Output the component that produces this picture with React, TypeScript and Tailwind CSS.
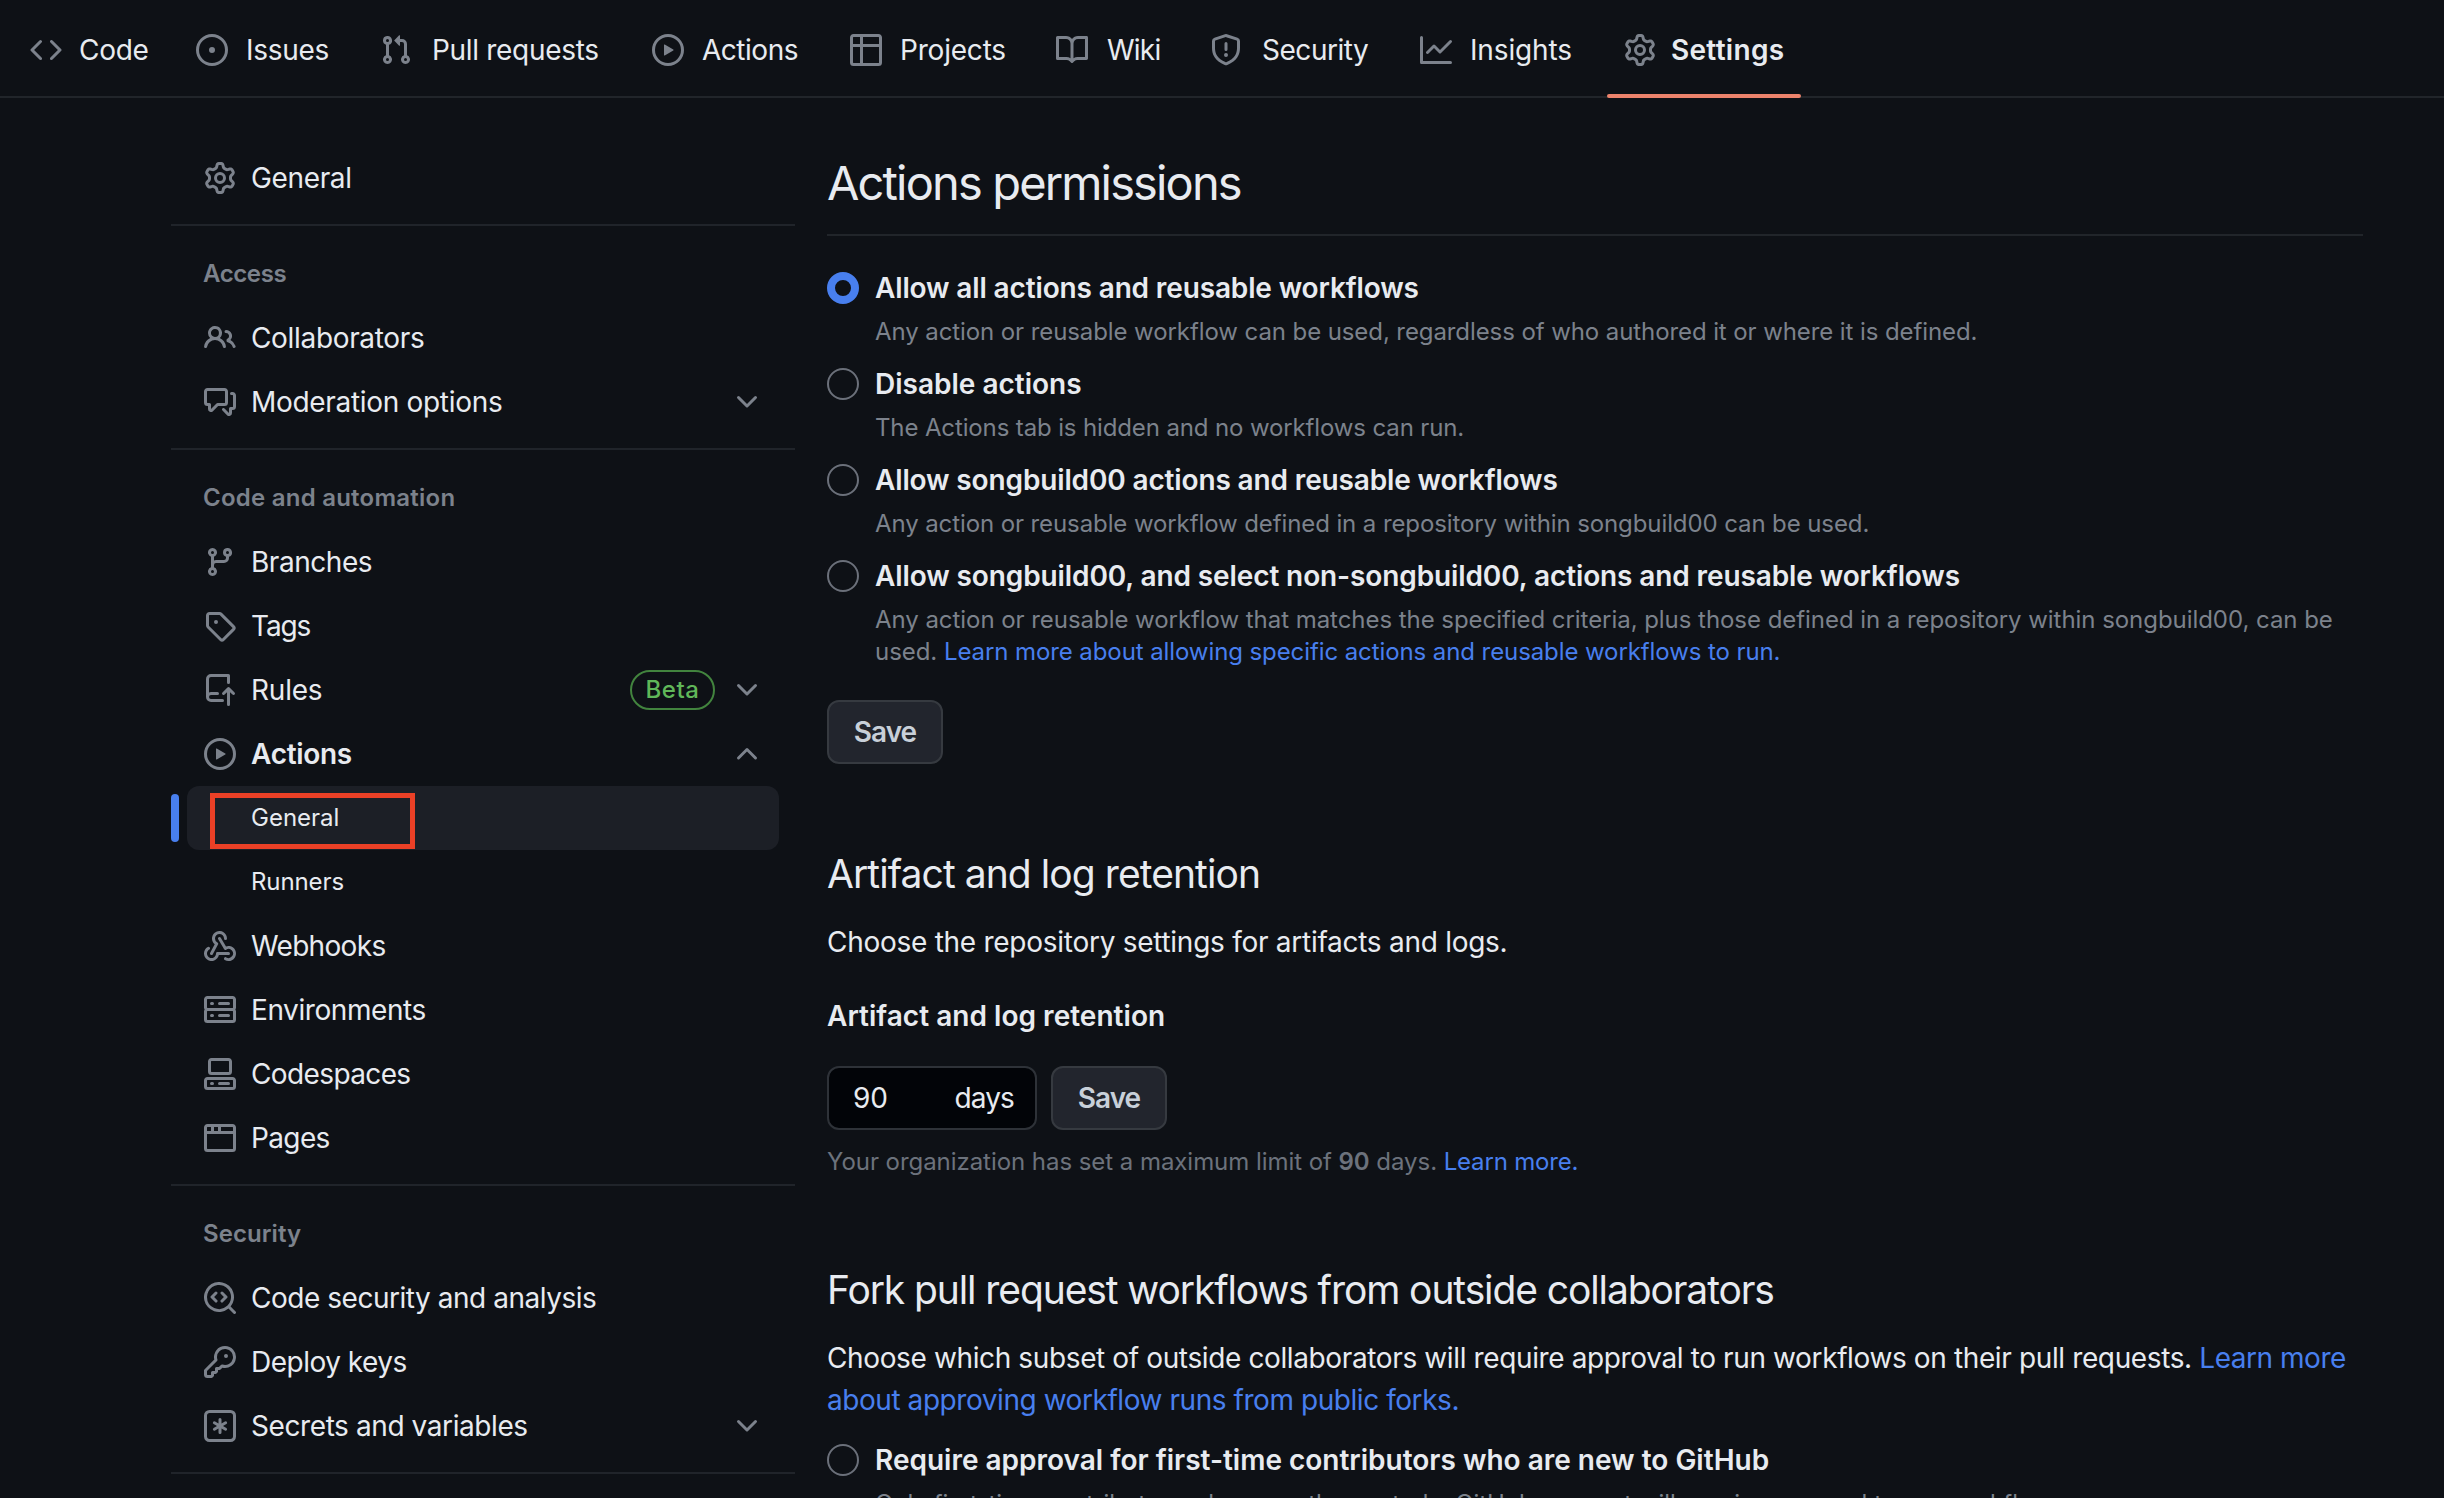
import React from 'react';

const ICONS = {
  code: 'm11.28 3.22 4.25 4.25a.75.75 0 0 1 0 1.06l-4.25 4.25a.749.749 0 0 1-1.275-.326.749.749 0 0 1 .215-.734L13.94 8l-3.72-3.72a.749.749 0 0 1 .326-1.275.749.749 0 0 1 .734.215Zm-6.56 0a.751.751 0 0 1 1.042.018.751.751 0 0 1 .018 1.042L2.06 8l3.72 3.72a.749.749 0 0 1-.326 1.275.749.749 0 0 1-.734-.215L.47 8.53a.75.75 0 0 1 0-1.06Z',
  issue: 'M8 9.5a1.5 1.5 0 1 0 0-3 1.5 1.5 0 0 0 0 3Z M8 0a8 8 0 1 1 0 16A8 8 0 0 1 8 0ZM1.5 8a6.5 6.5 0 1 0 13 0 6.5 6.5 0 0 0-13 0Z',
  pullRequest: 'M1.5 3.25a2.25 2.25 0 1 1 3 2.122v5.256a2.251 2.251 0 1 1-1.5 0V5.372A2.25 2.25 0 0 1 1.5 3.25Zm5.677-.177L9.573.677A.25.25 0 0 1 10 .854V2.5h1A2.5 2.5 0 0 1 13.5 5v5.628a2.251 2.251 0 1 1-1.5 0V5a1 1 0 0 0-1-1h-1v1.646a.25.25 0 0 1-.427.177L7.177 3.427a.25.25 0 0 1 0-.354ZM3.75 2.5a.75.75 0 1 0 0 1.5.75.75 0 0 0 0-1.5Zm0 9.5a.75.75 0 1 0 0 1.5.75.75 0 0 0 0-1.5Zm8.25.75a.75.75 0 1 0 1.5 0 .75.75 0 0 0-1.5 0Z',
  play: 'M8 0a8 8 0 1 1 0 16A8 8 0 0 1 8 0ZM1.5 8a6.5 6.5 0 1 0 13 0 6.5 6.5 0 0 0-13 0Zm4.879-2.773 4.264 2.559a.25.25 0 0 1 0 .428l-4.264 2.559A.25.25 0 0 1 6 10.559V5.442a.25.25 0 0 1 .379-.215Z',
  table: 'M0 1.75C0 .784.784 0 1.75 0h12.5C15.216 0 16 .784 16 1.75v12.5A1.75 1.75 0 0 1 14.25 16H1.75A1.75 1.75 0 0 1 0 14.25ZM6.5 6.5v8h7.75a.25.25 0 0 0 .25-.25V6.5Zm8-1.5V1.75a.25.25 0 0 0-.25-.25H6.5V5Zm-13 1.5v7.75c0 .138.112.25.25.25H5v-8ZM5 5V1.5H1.75a.25.25 0 0 0-.25.25V5Z',
  book: 'M0 1.75A.75.75 0 0 1 .75 1h4.253c1.227 0 2.317.59 3 1.501A3.743 3.743 0 0 1 11.006 1h4.245a.75.75 0 0 1 .75.75v10.5a.75.75 0 0 1-.75.75h-4.507a2.25 2.25 0 0 0-1.591.659l-.622.621a.75.75 0 0 1-1.06 0l-.622-.621A2.25 2.25 0 0 0 5.258 13H.75a.75.75 0 0 1-.75-.75Zm7.251 10.324.004-5.073-.002-2.253A2.25 2.25 0 0 0 5.003 2.5H1.5v9h3.757a3.75 3.75 0 0 1 1.994.574ZM8.755 4.75l-.004 7.322a3.752 3.752 0 0 1 1.992-.572H14.5v-9h-3.495a2.25 2.25 0 0 0-2.25 2.25Z',
  shield: 'M7.467.133a1.748 1.748 0 0 1 1.066 0l5.25 1.68A1.75 1.75 0 0 1 15 3.48V7c0 1.566-.32 3.182-1.303 4.682-.983 1.498-2.585 2.813-5.032 3.855a1.697 1.697 0 0 1-1.33 0c-2.447-1.042-4.049-2.357-5.032-3.855C1.32 10.182 1 8.566 1 7V3.48a1.75 1.75 0 0 1 1.217-1.667Zm.61 1.429a.25.25 0 0 0-.153 0l-5.25 1.68a.25.25 0 0 0-.174.238V7c0 1.358.275 2.666 1.057 3.86.784 1.194 2.121 2.34 4.366 3.297a.196.196 0 0 0 .154 0c2.245-.956 3.582-2.104 4.366-3.298C13.225 9.666 13.5 8.36 13.5 7V3.48a.251.251 0 0 0-.174-.237l-5.25-1.68ZM8.75 4.75v3a.75.75 0 0 1-1.5 0v-3a.75.75 0 0 1 1.5 0ZM9 10.5a1 1 0 1 1-2 0 1 1 0 0 1 2 0Z',
  graph: 'M1.5 1.75V13.5h13.75a.75.75 0 0 1 0 1.5H.75a.75.75 0 0 1-.75-.75V1.75a.75.75 0 0 1 1.5 0Zm14.28 2.53-5.25 5.25a.75.75 0 0 1-1.06 0L7 7.06 4.28 9.78a.751.751 0 0 1-1.042-.018.751.751 0 0 1-.018-1.042l3.25-3.25a.75.75 0 0 1 1.06 0L10 7.94l4.72-4.72a.751.751 0 0 1 1.042.018.751.751 0 0 1 .018 1.042Z',
  gear: 'M8 0a8.2 8.2 0 0 1 .701.031C9.444.095 9.99.645 10.16 1.29l.288 1.107c.018.066.079.158.212.224.231.114.454.243.668.386.123.082.233.09.299.071l1.103-.303c.644-.176 1.392.021 1.82.63.27.385.506.792.704 1.218.315.675.111 1.422-.364 1.891l-.814.806c-.049.048-.098.147-.088.294.016.257.016.515 0 .772-.01.147.038.246.088.294l.814.806c.475.469.679 1.216.364 1.891a7.977 7.977 0 0 1-.704 1.217c-.428.61-1.176.807-1.82.63l-1.102-.302c-.067-.019-.177-.011-.3.071a5.909 5.909 0 0 1-.668.386c-.133.066-.194.158-.211.224l-.29 1.106c-.168.646-.715 1.196-1.458 1.26a8.006 8.006 0 0 1-1.402 0c-.743-.064-1.289-.614-1.458-1.26l-.289-1.106c-.018-.066-.079-.158-.212-.224a5.738 5.738 0 0 1-.668-.386c-.123-.082-.233-.09-.299-.071l-1.103.303c-.644.176-1.392-.021-1.82-.63a8.12 8.12 0 0 1-.704-1.218c-.315-.675-.111-1.422.363-1.891l.815-.806c.05-.048.098-.147.088-.294a6.214 6.214 0 0 1 0-.772c.01-.147-.038-.246-.088-.294l-.815-.806C.635 6.045.431 5.298.746 4.623a7.92 7.92 0 0 1 .704-1.217c.428-.61 1.176-.807 1.82-.63l1.102.302c.067.019.177.011.3-.071.214-.143.437-.272.668-.386.133-.066.194-.158.211-.224l.29-1.106C6.009.645 6.556.095 7.299.03 7.53.01 7.764 0 8 0Zm-.571 1.525c-.036.003-.108.036-.137.146l-.289 1.105c-.147.561-.549.967-.998 1.189-.173.086-.34.183-.5.29-.417.278-.97.423-1.529.27l-1.103-.303c-.109-.03-.175.016-.195.045-.22.312-.412.644-.573.99-.014.031-.021.11.059.19l.815.806c.411.406.562.957.53 1.456a4.709 4.709 0 0 0 0 .582c.032.499-.119 1.05-.53 1.456l-.815.806c-.081.08-.073.159-.059.19.162.346.353.677.573.989.02.03.085.076.195.046l1.102-.303c.56-.153 1.113-.008 1.53.27.161.107.328.204.501.29.447.222.85.629.997 1.189l.289 1.105c.029.109.101.143.137.146a6.6 6.6 0 0 0 1.142 0c.036-.003.108-.036.137-.146l.289-1.105c.147-.561.549-.967.998-1.189.173-.086.34-.183.5-.29.417-.278.97-.423 1.529-.27l1.103.303c.109.029.175-.016.195-.045.22-.313.411-.644.573-.99.014-.031.021-.11-.059-.19l-.815-.806c-.411-.406-.562-.957-.53-1.456a4.709 4.709 0 0 0 0-.582c-.032-.499.119-1.05.53-1.456l.815-.806c.081-.08.073-.159.059-.19a6.464 6.464 0 0 0-.573-.989c-.02-.03-.085-.076-.195-.046l-1.102.303c-.56.153-1.113.008-1.53-.27a4.44 4.44 0 0 0-.501-.29c-.447-.222-.85-.629-.997-1.189l-.289-1.105c-.029-.11-.101-.143-.137-.146a6.6 6.6 0 0 0-1.142 0ZM11 8a3 3 0 1 1-6 0 3 3 0 0 1 6 0ZM9.5 8a1.5 1.5 0 1 0-3.001.001A1.5 1.5 0 0 0 9.5 8Z',
  people: 'M2 5.5a3.5 3.5 0 1 1 5.898 2.549 5.508 5.508 0 0 1 3.034 4.084.75.75 0 1 1-1.482.235 4 4 0 0 0-7.9 0 .75.75 0 0 1-1.482-.236A5.507 5.507 0 0 1 3.102 8.05 3.493 3.493 0 0 1 2 5.5ZM11 4a3.001 3.001 0 0 1 2.22 5.018 5.01 5.01 0 0 1 2.56 3.012.749.749 0 0 1-.885.954.752.752 0 0 1-.549-.514 3.507 3.507 0 0 0-2.522-2.372.75.75 0 0 1-.574-.73v-.352a.75.75 0 0 1 .416-.672A1.5 1.5 0 0 0 11 5.5.75.75 0 0 1 11 4Zm-5.5-.5a2 2 0 1 0-.001 3.999A2 2 0 0 0 5.5 3.5Z',
  discussion: 'M1.75 1h8.5c.966 0 1.75.784 1.75 1.75v5.5A1.75 1.75 0 0 1 10.25 10H7.061l-2.574 2.573A1.458 1.458 0 0 1 2 11.543V10h-.25A1.75 1.75 0 0 1 0 8.25v-5.5C0 1.784.784 1 1.75 1ZM1.5 2.75v5.5c0 .138.112.25.25.25h1a.75.75 0 0 1 .75.75v2.19l2.72-2.72a.749.749 0 0 1 .53-.22h3.5a.25.25 0 0 0 .25-.25v-5.5a.25.25 0 0 0-.25-.25h-8.5a.25.25 0 0 0-.25.25Zm13 2a.25.25 0 0 0-.25-.25h-.5a.75.75 0 0 1 0-1.5h.5c.966 0 1.75.784 1.75 1.75v5.5A1.75 1.75 0 0 1 14.25 12H14v1.543a1.458 1.458 0 0 1-2.487 1.03L9.22 12.28a.749.749 0 0 1 .326-1.275.749.749 0 0 1 .734.215l2.22 2.22v-2.19a.75.75 0 0 1 .75-.75h1a.25.25 0 0 0 .25-.25Z',
  branch: 'M9.5 3.25a2.25 2.25 0 1 1 3 2.122V6A2.5 2.5 0 0 1 10 8.5H6a1 1 0 0 0-1 1v1.128a2.251 2.251 0 1 1-1.5 0V5.372a2.25 2.25 0 1 1 1.5 0v1.836A2.493 2.493 0 0 1 6 7h4a1 1 0 0 0 1-1v-.628A2.25 2.25 0 0 1 9.5 3.25Zm-6 0a.75.75 0 1 0 1.5 0 .75.75 0 0 0-1.5 0Zm8.25-.75a.75.75 0 1 0 0 1.5.75.75 0 0 0 0-1.5ZM4.25 12a.75.75 0 1 0 0 1.5.75.75 0 0 0 0-1.5Z',
  tag: 'M1 7.775V2.75C1 1.784 1.784 1 2.75 1h5.025c.464 0 .91.184 1.238.513l6.25 6.25a1.75 1.75 0 0 1 0 2.474l-5.026 5.026a1.75 1.75 0 0 1-2.474 0l-6.25-6.25A1.752 1.752 0 0 1 1 7.775Zm1.5 0c0 .066.026.13.073.177l6.25 6.25a.25.25 0 0 0 .354 0l5.025-5.025a.25.25 0 0 0 0-.354l-6.25-6.25a.25.25 0 0 0-.177-.073H2.75a.25.25 0 0 0-.25.25ZM6 5a1 1 0 1 1 0 2 1 1 0 0 1 0-2Z',
  repoPush: 'M1 2.5A2.5 2.5 0 0 1 3.5 0h8.75a.75.75 0 0 1 .75.75v3.5a.75.75 0 0 1-1.5 0V1.5h-8a1 1 0 0 0-1 1v6.708A2.493 2.493 0 0 1 3.5 9h3.25a.75.75 0 0 1 0 1.5H3.5a1 1 0 0 0 0 2h5.75a.75.75 0 0 1 0 1.5H3.5A2.5 2.5 0 0 1 1 11.5Zm13.23 7.79-1.224-1.224v6.184a.75.75 0 0 1-1.5 0V9.066L10.28 10.29a.75.75 0 0 1-1.06-1.061l2.505-2.504a.75.75 0 0 1 1.06 0L15.29 9.23a.751.751 0 0 1-.018 1.042.751.751 0 0 1-1.042.018Z',
  webhook: 'M5.5 4.25a2.25 2.25 0 0 1 4.5 0 .75.75 0 0 0 1.5 0 3.75 3.75 0 1 0-6.14 2.889l-2.272 4.258a.75.75 0 0 0 1.324.706L7 7.25a.75.75 0 0 0-.309-1.015A2.25 2.25 0 0 1 5.5 4.25Z M7.364 3.607a.75.75 0 0 1 1.03.257l2.608 4.349a3.75 3.75 0 1 1-.628 6.785.75.75 0 0 1 .752-1.299 2.25 2.25 0 1 0-.033-3.88.75.75 0 0 1-1.03-.256L7.107 4.636a.75.75 0 0 1 .257-1.03Z M2.9 8.776A.75.75 0 0 1 2.625 9.8 2.25 2.25 0 1 0 6 11.75a.75.75 0 0 1 .75-.751h5.5a.75.75 0 0 1 0 1.5H7.425a3.751 3.751 0 1 1-5.55-3.998.75.75 0 0 1 1.024.274Z',
  server: 'M1.75 1h12.5c.966 0 1.75.784 1.75 1.75v4c0 .372-.116.717-.314 1 .198.283.314.628.314 1v4a1.75 1.75 0 0 1-1.75 1.75H1.75A1.75 1.75 0 0 1 0 12.75v-4c0-.358.109-.707.314-1a1.739 1.739 0 0 1-.314-1v-4C0 1.784.784 1 1.75 1ZM1.5 2.75v4c0 .138.112.25.25.25h12.5a.25.25 0 0 0 .25-.25v-4a.25.25 0 0 0-.25-.25H1.75a.25.25 0 0 0-.25.25Zm.25 5.75a.25.25 0 0 0-.25.25v4c0 .138.112.25.25.25h12.5a.25.25 0 0 0 .25-.25v-4a.25.25 0 0 0-.25-.25ZM7 4.75A.75.75 0 0 1 7.75 4h4.5a.75.75 0 0 1 0 1.5h-4.5A.75.75 0 0 1 7 4.75ZM7.75 10h4.5a.75.75 0 0 1 0 1.5h-4.5a.75.75 0 0 1 0-1.5ZM3 4.75A.75.75 0 0 1 3.75 4h.5a.75.75 0 0 1 0 1.5h-.5A.75.75 0 0 1 3 4.75ZM3.75 10h.5a.75.75 0 0 1 0 1.5h-.5a.75.75 0 0 1 0-1.5Z',
  codespaces: 'M0 11.25c0-.966.784-1.75 1.75-1.75h12.5c.966 0 1.75.784 1.75 1.75v3A1.75 1.75 0 0 1 14.25 16H1.75A1.75 1.75 0 0 1 0 14.25Zm2-9.5C2 .784 2.784 0 3.75 0h8.5C13.216 0 14 .784 14 1.75v5a1.75 1.75 0 0 1-1.75 1.75h-8.5A1.75 1.75 0 0 1 2 6.75Zm1.75-.25a.25.25 0 0 0-.25.25v5c0 .138.112.25.25.25h8.5a.25.25 0 0 0 .25-.25v-5a.25.25 0 0 0-.25-.25Zm-2 9.5a.25.25 0 0 0-.25.25v3c0 .138.112.25.25.25h12.5a.25.25 0 0 0 .25-.25v-3a.25.25 0 0 0-.25-.25Z M7 12.75a.75.75 0 0 1 .75-.75h4.5a.75.75 0 0 1 0 1.5h-4.5a.75.75 0 0 1-.75-.75Zm-4 0a.75.75 0 0 1 .75-.75h.5a.75.75 0 0 1 0 1.5h-.5a.75.75 0 0 1-.75-.75Z',
  browser: 'M0 2.75C0 1.784.784 1 1.75 1h12.5c.966 0 1.75.784 1.75 1.75v10.5A1.75 1.75 0 0 1 14.25 15H1.75A1.75 1.75 0 0 1 0 13.25ZM14.5 6h-13v7.25c0 .138.112.25.25.25h12.5a.25.25 0 0 0 .25-.25Zm-6-3.5v2h6V2.75a.25.25 0 0 0-.25-.25ZM5 2.5v2h2v-2Zm-3.25 0a.25.25 0 0 0-.25.25V4.5h2v-2Z',
  codescan: 'M8.47 4.97a.75.75 0 0 0 0 1.06L9.94 7.5 8.47 8.97a.75.75 0 1 0 1.06 1.06l2-2a.75.75 0 0 0 0-1.06l-2-2a.75.75 0 0 0-1.06 0ZM6.53 6.03a.75.75 0 0 0-1.06-1.06l-2 2a.75.75 0 0 0 0 1.06l2 2a.75.75 0 1 0 1.06-1.06L5.06 7.5l1.47-1.47Z M12.246 13.307a7.501 7.501 0 1 1 1.06-1.06l2.474 2.473a.749.749 0 1 1-1.06 1.06l-2.474-2.473ZM1.5 7.5a6.002 6.002 0 0 0 3.608 5.504 6.002 6.002 0 0 0 6.486-1.117.748.748 0 0 1 .292-.293A6 6 0 1 0 1.5 7.5Z',
  key: 'M10.5 0a5.499 5.499 0 1 1-1.288 10.848l-.932.932a.749.749 0 0 1-.53.22H7v.75a.749.749 0 0 1-.22.53l-.5.5a.749.749 0 0 1-.53.22H5v.75a.749.749 0 0 1-.22.53l-.5.5a.749.749 0 0 1-.53.22h-2A1.75 1.75 0 0 1 0 14.25v-2c0-.199.079-.389.22-.53l4.932-4.932A5.5 5.5 0 0 1 10.5 0Zm-4 5.5c-.001.431.069.86.205 1.269a.75.75 0 0 1-.181.768L1.5 12.56v1.69c0 .138.112.25.25.25h1.69l.06-.06v-1.19a.75.75 0 0 1 .75-.75h1.19l.06-.06v-1.19a.75.75 0 0 1 .75-.75h1.19l1.023-1.025a.75.75 0 0 1 .768-.18A4 4 0 1 0 6.5 5.5ZM11 6a1 1 0 1 1 0-2 1 1 0 0 1 0 2Z',
  asterisk: 'M0 2.75A2.75 2.75 0 0 1 2.75 0h10.5A2.75 2.75 0 0 1 16 2.75v10.5A2.75 2.75 0 0 1 13.25 16H2.75A2.75 2.75 0 0 1 0 13.25ZM2.75 1.5c-.69 0-1.25.56-1.25 1.25v10.5c0 .69.56 1.25 1.25 1.25h10.5c.69 0 1.25-.56 1.25-1.25V2.75c0-.69-.56-1.25-1.25-1.25Z M8 4a.75.75 0 0 1 .75.75V6.7l1.69-.975a.75.75 0 0 1 .75 1.3L9.5 8l1.69.976a.75.75 0 0 1-.75 1.298L8.75 9.3v1.951a.75.75 0 0 1-1.5 0V9.299l-1.69.976a.75.75 0 0 1-.75-1.3L6.5 8l-1.69-.975a.75.75 0 0 1 .75-1.3l1.69.976V4.75A.75.75 0 0 1 8 4Z',
  down: 'M12.78 5.22a.749.749 0 0 1 0 1.06l-4.25 4.25a.749.749 0 0 1-1.06 0L3.22 6.28a.749.749 0 1 1 1.06-1.06L8 8.939l3.72-3.719a.749.749 0 0 1 1.06 0Z',
  up: 'M3.22 10.53a.749.749 0 0 1 0-1.06l4.25-4.25a.749.749 0 0 1 1.06 0l4.25 4.25a.749.749 0 1 1-1.06 1.06L8 6.811 4.28 10.53a.749.749 0 0 1-1.06 0Z',
};

type IconName = keyof typeof ICONS;

function Icon({ name }: { name: IconName }) {
  return (
    <svg viewBox="0 0 16 16" className="size-8 shrink-0 fill-[#7c828c]" aria-hidden="true">
      <path d={ICONS[name]} />
    </svg>
  );
}

const TABS: { icon: IconName; label: string; box: string; text: string }[] = [
  { icon: 'code', label: 'Code', box: 'w-[150px]', text: 'pl-px tracking-[-0.3px]' },
  { icon: 'issue', label: 'Issues', box: 'w-[168px]', text: 'pl-0.5 tracking-[-0.31px]' },
  { icon: 'pullRequest', label: 'Pull requests', box: 'w-[256px]', text: 'pl-1 tracking-[-0.31px]' },
  { icon: 'play', label: 'Actions', box: 'w-[182px]', text: 'pl-0.5 tracking-[-0.48px]' },
  { icon: 'table', label: 'Projects', box: 'w-[190px]', text: 'pl-0.5 tracking-[-0.2px]' },
  { icon: 'book', label: 'Wiki', box: 'w-[138px]', text: 'pl-[3px] tracking-[-0.78px]' },
  { icon: 'shield', label: 'Security', box: 'w-[194px]', text: 'pl-1 tracking-[-0.47px]' },
  { icon: 'graph', label: 'Insights', box: 'w-[188px]', text: 'pl-0.5 tracking-[-0.15px]' },
];

function TopNav() {
  return (
    <nav className="flex h-[98px] gap-4 border-b-2 border-[#21252a] pl-3.5">
      {TABS.map((t) => (
        <a key={t.label} className={`flex shrink-0 items-center gap-4 pt-1 pl-4 whitespace-nowrap ${t.box}`}>
          <Icon name={t.icon} />
          <span className={t.text}>{t.label}</span>
        </a>
      ))}
      <a className="relative flex w-[192px] shrink-0 items-center gap-[15px] pt-1 pl-4 font-semibold tracking-[0.3px]">
        <Icon name="gear" />
        Settings
        <span className="absolute -inset-x-px -bottom-0.5 h-1 rounded-sm bg-[#ec836c]" />
      </a>
    </nav>
  );
}

function Row({ icon, label, track, chevron, badge, bold }: {
  icon: IconName; label: string; track: string; chevron?: 'up' | 'down'; badge?: string; bold?: boolean;
}) {
  return (
    <a className="mx-4 flex h-16 items-center pr-4 pl-[17px]">
      <Icon name={icon} />
      <span className={`flex-1 pl-[15px] ${track} ${bold ? 'font-semibold' : ''}`}>{label}</span>
      {badge && (
        <span className="mr-4 flex h-10 w-[85px] items-center justify-center rounded-full border-2 border-[#42843e] text-2xl font-medium tracking-[0.5px] text-[#60b759]">
          {badge}
        </span>
      )}
      {chevron && <Icon name={chevron} />}
    </a>
  );
}

function GroupTitle({ children, track }: { children: string; track: string }) {
  return (
    <h3 className={`mt-3.5 h-[82px] border-t-2 border-[#20242a] pt-[30px] pl-8 text-2xl leading-9 font-semibold text-[#7c828c] ${track}`}>
      {children}
    </h3>
  );
}

function Sidebar() {
  return (
    <aside className="w-[624px] shrink-0">
      <Row icon="gear" label="General" track="tracking-[-0.35px]" />
      <GroupTitle track="tracking-[-0.4px]">Access</GroupTitle>
      <Row icon="people" label="Collaborators" track="tracking-[-0.33px]" />
      <Row icon="discussion" label="Moderation options" track="tracking-[-0.31px]" chevron="down" />
      <GroupTitle track="tracking-[0.24px]">Code and automation</GroupTitle>
      <Row icon="branch" label="Branches" track="tracking-[-0.45px]" />
      <Row icon="tag" label="Tags" track="tracking-[-1.1px]" />
      <Row icon="repoPush" label="Rules" track="tracking-[-0.22px]" badge="Beta" chevron="down" />
      <Row icon="play" label="Actions" track="tracking-[-0.3px]" chevron="up" bold />
      <div className="flex h-16 items-center gap-2">
        <span className="h-12 w-2 rounded-full bg-[#487fee]" />
        <a className="relative flex h-16 w-[592px] items-center rounded-xl bg-[#1c1f26] pl-16 text-2xl">
          General
          <span className="absolute top-[7px] left-[23px] h-14 w-[205px] border-[5px] border-[#eb4026]" />
        </a>
      </div>
      <a className="flex h-16 items-center pl-20 text-2xl tracking-[-0.1px]">Runners</a>
      <Row icon="webhook" label="Webhooks" track="tracking-[-0.68px]" />
      <Row icon="server" label="Environments" track="tracking-[-0.42px]" />
      <Row icon="codespaces" label="Codespaces" track="tracking-[-0.62px]" />
      <Row icon="browser" label="Pages" track="tracking-[-0.63px]" />
      <GroupTitle track="tracking-[0.07px]">Security</GroupTitle>
      <Row icon="codescan" label="Code security and analysis" track="tracking-[-0.47px]" />
      <Row icon="key" label="Deploy keys" track="tracking-[-0.5px]" />
      <Row icon="asterisk" label="Secrets and variables" track="tracking-[-0.41px]" chevron="down" />
      <div className="mt-3.5 border-t-2 border-[#20242a]" />
    </aside>
  );
}

function Option({ label, track = '', checked, children }: {
  label: string; track?: string; checked?: boolean; children: React.ReactNode;
}) {
  return (
    <label className="flex gap-4 pb-[15px]">
      <span className={`mt-[5px] size-8 shrink-0 rounded-full ${checked ? 'border-8 border-[#487fee]' : 'border-2 border-[#6b707a]'}`} />
      <span className="flex flex-col">
        <span className={`leading-[42px] font-semibold whitespace-nowrap ${track}`}>{label}</span>
        <span className="pt-[7px] text-2xl leading-8 whitespace-nowrap text-[#7c828c]">{children}</span>
      </span>
    </label>
  );
}

function SaveButton() {
  return (
    <button className="h-16 w-[116px] rounded-xl border-2 border-[#363a40] bg-[#22252d] font-semibold tracking-[-1px] text-[#c8d0d9]">
      Save
    </button>
  );
}

function Link({ children, className = '' }: { children: string; className?: string }) {
  return <a className={`text-[#487fee] ${className}`}>{children}</a>;
}

export default function App() {
  return (
    <div className="h-[1498px] w-[2444px] overflow-hidden bg-[#0e1116] font-['Inter','Liberation_Sans',sans-serif] text-[28px] leading-[42px] text-[#e8ebf0]">
      <TopNav />
      <div className="flex gap-8 pt-12 pl-[171px]">
        <Sidebar />
        <main className="w-[1536px] shrink-0">
          <h2 className="border-b-2 border-[#21252a] pt-px pb-[15px] text-[47px] leading-[72px] tracking-[-1.85px]">Actions permissions</h2>
          <div className="pt-[31px]">
            <Option label="Allow all actions and reusable workflows" track="tracking-[-0.14px]" checked>
              <span className="tracking-[-0.09px]">Any action or reusable workflow can be used, regardless of who authored it or where it is defined.</span>
            </Option>
            <Option label="Disable actions">
              <span className="tracking-[-0.13px]">The Actions tab is hidden and no workflows can run.</span>
            </Option>
            <Option label="Allow songbuild00 actions and reusable workflows" track="tracking-[-0.14px]">
              <span className="tracking-[-0.1px]">Any action or reusable workflow defined in a repository within songbuild00 can be used.</span>
            </Option>
            <Option label="Allow songbuild00, and select non-songbuild00, actions and reusable workflows" track="tracking-[-0.11px]">
              <span className="tracking-[-0.05px]">
                Any action or reusable workflow that matches the specified criteria, plus those defined in a repository within songbuild00, can be
                <br />
                used. <Link className="tracking-[-0.09px]">Learn more about allowing specific actions and reusable workflows to run.</Link>
              </span>
            </Option>
          </div>
          <div className="pt-[17px]">
            <SaveButton />
          </div>

          <h2 className="mt-20 text-[39px] leading-[60px] tracking-[-0.93px]">Artifact and log retention</h2>
          <p className="mt-[17px] tracking-[-0.27px]">Choose the repository settings for artifacts and logs.</p>
          <p className="mt-8 font-semibold tracking-[0.03px]">Artifact and log retention</p>
          <div className="mt-[29px] flex gap-3.5">
            <div className="flex h-16 w-[210px] items-center justify-between rounded-xl border-2 border-[#2e3238] bg-[#020408] pr-[21px] pl-6">
              <span>90</span>
              <span className="tracking-[-0.86px]">days</span>
            </div>
            <SaveButton />
          </div>
          <p className="mt-3.5 text-2xl leading-9 tracking-[-0.05px] text-[#6c727c]">
            Your organization has set a maximum limit of <b className="font-semibold">90</b> days.{' '}
            <Link className="tracking-[-0.19px]">Learn more.</Link>
          </p>

          <h2 className="mt-20 text-[39px] leading-[60px] tracking-[-1.1px] whitespace-nowrap">
            Fork pull request workflows from outside collaborators
          </h2>
          <p className="mt-[17px] mb-[18px] tracking-[-0.375px] whitespace-nowrap">
            Choose which subset of outside collaborators will require approval to run workflows on their pull requests.{' '}
            <Link className="tracking-[-0.47px]">Learn more</Link>
            <br />
            <Link className="tracking-[-0.44px]">about approving workflow runs from public forks.</Link>
          </p>
          <Option label="Require approval for first-time contributors who are new to GitHub">
            Only first-time contributors who recently created a GitHub account will require approval to run workflows.
          </Option>
        </main>
      </div>
    </div>
  );
}
